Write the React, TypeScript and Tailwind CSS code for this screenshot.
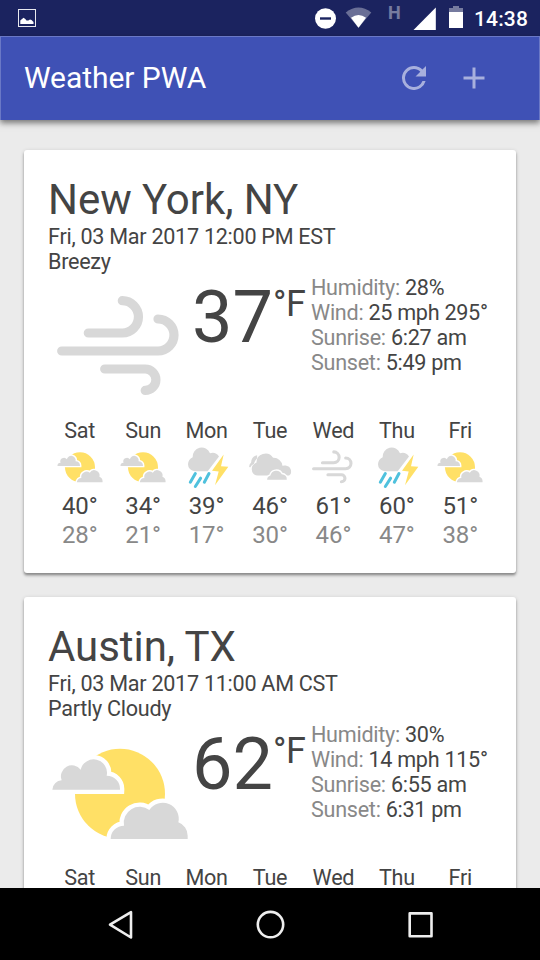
import React from "react";

type Kind = "partly" | "storm" | "cloudy" | "wind";

function WeatherIcon({ kind, className }: { kind: Kind; className: string }) {
  return (
    <svg viewBox="0 0 144 144" className={className} fill="#d8d8d8">
      {kind === "wind" && (
        <g fill="none" stroke="#d8d8d8" strokeWidth="9.2" strokeLinecap="round">
          <path d="M40.3 59H74.3a16.1 16.1 0 0 0 0-32.3" />
          <path d="M13.7 77H110a16 16 0 0 0 0-32" />
          <path d="M56.7 95H97.2a10.7 10.7 0 0 1 0 21.4" />
        </g>
      )}
      {kind === "partly" && (
        <g transform="translate(-8 -0.3) scale(.33333)">
          <circle cx="240" cy="219" r="135" fill="#ffe066" />
          <g fill="#fff" stroke="#fff" strokeWidth="26">
            <path d="M37 207A29 29 0 0 1 65 179A33 33 0 0 1 122 147A40 40 0 0 1 200 165A40 40 0 0 1 240 207Z" />
            <path d="M212 355A40 40 0 0 1 252 315A48 48 0 0 1 328 268A48 48 0 0 1 415 305A42 42 0 0 1 443 345V355Z" />
          </g>
          <path d="M37 207A29 29 0 0 1 65 179A33 33 0 0 1 122 147A40 40 0 0 1 200 165A40 40 0 0 1 240 207Z" />
          <path d="M212 355A40 40 0 0 1 252 315A48 48 0 0 1 328 268A48 48 0 0 1 415 305A42 42 0 0 1 443 345V355Z" />
        </g>
      )}
      {kind === "storm" && (
        <g transform="translate(-428 -99.5)">
          <path d="M463 184A21 21 0 0 1 443 163A25 25 0 0 1 457 142A27 27 0 0 1 509 130A24 24 0 0 1 536 140L502 184Z" />
          <path fill="#ffe066" d="M550 134L515 183L535 185L524 226L564 171L542 169Z" />
          <path
            d="M465 191L450 217M481 205L465 230M506 191L492 217"
            fill="none"
            stroke="#4fc1dd"
            strokeWidth="9"
            strokeLinecap="round"
          />
        </g>
      )}
      {kind === "cloudy" && (
        <g transform="translate(-197.7 -10.5)">
          <path d="M207 82A17 17 0 0 1 213 69A24 24 0 0 1 231 47V56A33 33 0 0 0 222 73A26 26 0 0 0 210 84Z" />
          <path d="M233 108A18 18 0 0 1 215 89A19 19 0 0 1 229 70A27 27 0 0 1 279 55A26 26 0 0 1 307 79A19 19 0 0 1 333 98Q333 106 327 108Z" />
          <path
            stroke="#fff"
            strokeWidth="8"
            d="M261 121A14 14 0 0 1 271 108A18 18 0 0 1 305 104A15 15 0 0 1 320 121Z"
          />
          <path d="M261 121A14 14 0 0 1 271 108A18 18 0 0 1 305 104A15 15 0 0 1 320 121Z" />
        </g>
      )}
    </svg>
  );
}

type Day = { day: string; kind?: Kind; high?: number; low?: number };

type City = {
  city: string;
  date: string;
  summary: string;
  kind: Kind;
  temp: number;
  details: [string, string][];
  days: Day[];
};

const cities: City[] = [
  {
    city: "New York, NY",
    date: "Fri, 03 Mar 2017 12:00 PM EST",
    summary: "Breezy",
    kind: "wind",
    temp: 37,
    details: [
      ["Humidity:", "28%"],
      ["Wind:", "25 mph 295°"],
      ["Sunrise:", "6:27 am"],
      ["Sunset:", "5:49 pm"],
    ],
    days: [
      { day: "Sat", kind: "partly", high: 40, low: 28 },
      { day: "Sun", kind: "partly", high: 34, low: 21 },
      { day: "Mon", kind: "storm", high: 39, low: 17 },
      { day: "Tue", kind: "cloudy", high: 46, low: 30 },
      { day: "Wed", kind: "wind", high: 61, low: 46 },
      { day: "Thu", kind: "storm", high: 60, low: 47 },
      { day: "Fri", kind: "partly", high: 51, low: 38 },
    ],
  },
  {
    city: "Austin, TX",
    date: "Fri, 03 Mar 2017 11:00 AM CST",
    summary: "Partly Cloudy",
    kind: "partly",
    temp: 62,
    details: [
      ["Humidity:", "30%"],
      ["Wind:", "14 mph 115°"],
      ["Sunrise:", "6:55 am"],
      ["Sunset:", "6:31 pm"],
    ],
    days: [
      { day: "Sat" },
      { day: "Sun" },
      { day: "Mon" },
      { day: "Tue" },
      { day: "Wed" },
      { day: "Thu" },
      { day: "Fri" },
    ],
  },
];

function Card({ c }: { c: City }) {
  return (
    <section className="h-[423px] shrink-0 rounded-[3px] bg-white px-6 pt-[24.5px] text-[21.6px] leading-[25.3px] tracking-[-0.28px] text-[#444] shadow-[0_3px_3px_rgba(0,0,0,0.16),0_1px_4px_rgba(0,0,0,0.16),0_2px_2px_rgba(0,0,0,0.2)]">
      <h2 className="text-[42px] leading-[49px] tracking-[-0.05px]">{c.city}</h2>
      <div>{c.date}</div>
      <div className="-mt-[0.3px]">{c.summary}</div>
      <div className="flex h-36">
        <WeatherIcon kind={c.kind} className="size-36 shrink-0" />
        <div className="flex w-[119px] shrink-0 items-start tracking-normal">
          <span className="pt-0.5 text-[72px] leading-[84px]">{c.temp}</span>
          <span className="pt-[9px] text-[36px] leading-[42px] tracking-[-0.4px]">°F</span>
        </div>
        <div className="pt-[0.4px] whitespace-nowrap">
          {c.details.map(([k, v]) => (
            <div key={k}>
              <span className="text-[#888]">{k}</span> {v}
            </div>
          ))}
        </div>
      </div>
      <div className="grid grid-cols-7 text-center">
        {c.days.map((d) => (
          <div key={d.day} className="flex flex-col items-center">
            <span>{d.day}</span>
            {d.kind && (
              <>
                <WeatherIcon kind={d.kind} className="size-12" />
                <span className="pt-px text-[24px] leading-[28.8px] tracking-[-0.1px]">{d.high}°</span>
                <span className="text-[24px] leading-[28.8px] tracking-[-0.1px] text-[#888]">{d.low}°</span>
              </>
            )}
          </div>
        ))}
      </div>
    </section>
  );
}

function StatusBar() {
  return (
    <div className="flex h-9 shrink-0 bg-[#1b235f] text-white">
      <svg className="h-9 w-[465px] shrink-0" viewBox="0 0 465 36" fill="#fff">
        <rect x="18.5" y="9.5" width="17" height="17" fill="none" stroke="#fff" strokeOpacity=".9" />
        <path d="M20.3 24V20.5L22 19L23.5 17.8L25.3 19L26.5 20.5H28.3L30 19.5L31.5 20L33.5 22V24Z" />
        <ellipse cx="325.5" cy="18.5" rx="10.5" ry="10.3" />
        <path d="M320 17.3H331V19.7H320Z" fill="#1b235f" />
        <path d="M345.7 12.5Q358.5 2.5 371.3 12.5L358.5 27.7Z" opacity=".35" />
        <path d="M351 17.7Q358.5 12.3 366 17.7L358.5 27.7Z" />
        <path d="M435.8 7.5V30H413.5Z" />
        <path d="M453 6H459V8H463V12H449V8H453Z" opacity=".4" />
        <path d="M449 12H463V28H449Z" />
        <text x="388" y="19" className="font-[Roboto] text-[18px] font-bold" opacity=".4">H</text>
      </svg>
      <span className="ml-[9px] text-[21px] leading-[38px] font-medium tracking-[0.15px] whitespace-nowrap">14:38</span>
    </div>
  );
}

export default function App() {
  return (
    <div className="flex h-[960px] w-[540px] flex-col overflow-hidden bg-[#ebebeb] font-[Roboto,sans-serif]">
      <StatusBar />
      <header className="z-10 flex h-[83.5px] shrink-0 items-center border border-b-0 border-[#6a78c6] bg-[#3f51b5] pr-[47px] pl-[23px] text-white shadow-[0_3px_6px_rgba(0,0,0,0.5)]">
        <h1 className="grow -translate-y-px text-[30px] tracking-[-0.05px]">Weather PWA</h1>
        <svg viewBox="0 0 24 24" className="mr-6 size-9" fill="#fff" opacity=".55">
          <path d="M17.65 6.35A7.96 7.96 0 0 0 12 4a8 8 0 1 0 7.73 10h-2.08A6 6 0 1 1 12 6c1.66 0 3.14.69 4.22 1.78L13 11h7V4z" />
        </svg>
        <svg viewBox="0 0 24 24" className="size-9" fill="#fff" opacity=".55">
          <path d="M19 13h-6v6h-2v-6H5v-2h6V5h2v6h6z" />
        </svg>
      </header>
      <main className="flex min-h-0 grow flex-col gap-6 overflow-hidden px-6 pt-[30.9px]">
        {cities.map((c) => (
          <Card key={c.city} c={c} />
        ))}
      </main>
      <nav className="h-[72px] shrink-0 bg-black">
        <svg viewBox="0 0 540 72" className="h-[72px] w-[540px]" fill="none" stroke="#eee" strokeWidth="2.6" strokeLinejoin="round">
          <path d="M131 24.2V49.5L110 36.7Z" />
          <circle cx="270.5" cy="36.6" r="12.7" />
          <rect x="409.7" y="25.4" width="21.8" height="22.8" />
        </svg>
      </nav>
    </div>
  );
}
